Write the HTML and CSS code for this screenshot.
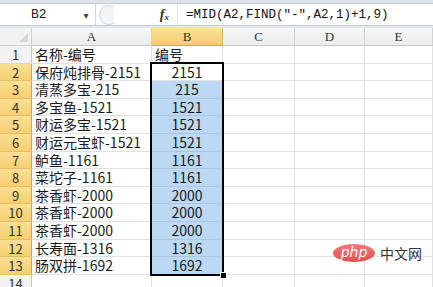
FILE: index.html
```html
<!DOCTYPE html>
<html lang="zh-CN">
<head>
    <meta charset="UTF-8">
    <title>MID FIND 提取编号</title>
    <link rel="stylesheet" href="styles.css">
</head>
<body>
    <div class="top-strip"></div>

    <!-- 编辑栏 -->
    <div class="formula-bar">
        <div class="name-box">
            <span class="cell-ref">B2</span>
            <span class="drop">&#9662;</span>
        </div>
        <div class="splitter"><span class="knob"></span></div>
        <div class="fx-area"><span class="fx">f<span class="fx-x">x</span></span></div>
        <div class="formula">=MID(A2,FIND(″-″,A2,1)+1,9)</div>
    </div>
    <div class="bar-gap"></div>

    <!-- 工作表 -->
    <div class="sheet">
        <div class="corner"><span class="tri"></span></div>
        <div class="ch">A</div>
        <div class="ch sel">B</div>
        <div class="ch">C</div>
        <div class="ch">D</div>
        <div class="ch">E</div>

        <div class="rh">1</div>
        <div class="c">名称-编号</div>
        <div class="c">编号</div>
        <div class="c"></div><div class="c"></div><div class="c"></div>

        <div class="rh sel">2</div>
        <div class="c">保府炖排骨-2151</div>
        <div class="c num">2151</div>
        <div class="c"></div><div class="c"></div><div class="c"></div>

        <div class="rh sel">3</div>
        <div class="c">清蒸多宝-215</div>
        <div class="c num hl">215</div>
        <div class="c"></div><div class="c"></div><div class="c"></div>

        <div class="rh sel">4</div>
        <div class="c">多宝鱼-1521</div>
        <div class="c num hl">1521</div>
        <div class="c"></div><div class="c"></div><div class="c"></div>

        <div class="rh sel">5</div>
        <div class="c">财运多宝-1521</div>
        <div class="c num hl">1521</div>
        <div class="c"></div><div class="c"></div><div class="c"></div>

        <div class="rh sel">6</div>
        <div class="c">财运元宝虾-1521</div>
        <div class="c num hl">1521</div>
        <div class="c"></div><div class="c"></div><div class="c"></div>

        <div class="rh sel">7</div>
        <div class="c">鲈鱼-1161</div>
        <div class="c num hl">1161</div>
        <div class="c"></div><div class="c"></div><div class="c"></div>

        <div class="rh sel">8</div>
        <div class="c">菜坨子-1161</div>
        <div class="c num hl">1161</div>
        <div class="c"></div><div class="c"></div><div class="c"></div>

        <div class="rh sel">9</div>
        <div class="c">茶香虾-2000</div>
        <div class="c num hl">2000</div>
        <div class="c"></div><div class="c"></div><div class="c"></div>

        <div class="rh sel">10</div>
        <div class="c">茶香虾-2000</div>
        <div class="c num hl">2000</div>
        <div class="c"></div><div class="c"></div><div class="c"></div>

        <div class="rh sel">11</div>
        <div class="c">茶香虾-2000</div>
        <div class="c num hl">2000</div>
        <div class="c"></div><div class="c"></div><div class="c"></div>

        <div class="rh sel">12</div>
        <div class="c">长寿面-1316</div>
        <div class="c num hl">1316</div>
        <div class="c"></div><div class="c"></div><div class="c"></div>

        <div class="rh sel">13</div>
        <div class="c">肠双拼-1692</div>
        <div class="c num hl">1692</div>
        <div class="c"></div><div class="c"></div><div class="c"></div>

        <div class="rh">14</div>
        <div class="c"></div><div class="c"></div>
        <div class="c"></div><div class="c"></div><div class="c"></div>

        <!-- 选区边框 B2:B13 -->
        <div class="selection"><span class="fill-handle"></span></div>

        <!-- 水印 -->
        <div class="watermark">
            <span class="php">php</span>
            <span class="cn">中文网</span>
        </div>
    </div>
</body>
</html>
```

FILE: styles.css
```css
body {
    margin: 0;
    width: 433px;
    height: 287px;
    overflow: hidden;
    background: #ffffff;
    font-family: "Noto Sans CJK SC", "DejaVu Sans", sans-serif;
    color: #1a1a1a;
}
.top-strip {
    height: 3px;
    background: #dfe3e8;
}
.formula-bar {
    display: flex;
    align-items: stretch;
    height: 23px;
    box-sizing: border-box;
    border-top: 1px solid #c6cbd1;
    border-bottom: 1px solid #c6cbd1;
    background: #ffffff;
}
.name-box {
    width: 96px;
    display: flex;
    align-items: center;
    border-right: 1px solid #d4d8dc;
    box-sizing: border-box;
}
.cell-ref {
    font-family: "Liberation Mono", monospace;
    font-size: 13px;
    margin-left: 31px;
    color: #222;
}
.drop {
    font-size: 10px;
    margin-left: 37px;
    color: #444;
}
.splitter {
    width: 18px;
    position: relative;
    overflow: hidden;
}
.knob {
    position: absolute;
    left: 3px;
    top: 1px;
    width: 18px;
    height: 18px;
    border-radius: 50%;
    border: 1px solid #cfd3d8;
    background: #f4f5f6;
}
.fx-area {
    width: 64px;
    display: flex;
    align-items: center;
    justify-content: flex-end;
    padding-right: 8px;
    box-sizing: border-box;
    border-right: 1px solid #e2e4e7;
}
.fx {
    font-family: "Liberation Serif", serif;
    font-style: italic;
    font-weight: bold;
    font-size: 14px;
    color: #333;
}
.fx-x {
    font-size: 9px;
    vertical-align: -1px;
}
.formula {
    flex-grow: 1;
    display: flex;
    align-items: center;
    padding-left: 8px;
    font-family: "Liberation Mono", monospace;
    font-size: 12.5px;
    color: #111;
}
.bar-gap {
    height: 2px;
    background: #e4e8ec;
}
.sheet {
    position: relative;
    display: grid;
    grid-template-columns: 32px 120px 71px 72px 70px 68px;
    grid-template-rows: 18px repeat(14, 17.6px);
}
.corner {
    position: relative;
    background: #f2f2f2;
    border-right: 1px solid #cfcfcf;
    border-bottom: 1px solid #cfcfcf;
    box-sizing: border-box;
}
.tri {
    position: absolute;
    right: 3px;
    bottom: 3px;
    border-left: 9px solid transparent;
    border-bottom: 9px solid #d6d6d6;
}
.ch {
    background: linear-gradient(#f7f7f7, #ececec);
    border-right: 1px solid #d2d2d2;
    border-bottom: 1px solid #c8c8c8;
    box-sizing: border-box;
    text-align: center;
    font-family: "Liberation Serif", serif;
    font-size: 13px;
    line-height: 18px;
    color: #333;
}
.ch.sel {
    background: linear-gradient(#fbe29c, #f5cc6a);
    border-right-color: #e2b45a;
    border-bottom-color: #d9a441;
}
.rh {
    background: #f2f2f2;
    border-right: 1px solid #c8c8c8;
    border-bottom: 1px solid #d6d6d6;
    box-sizing: border-box;
    text-align: center;
    font-size: 13px;
    line-height: 17px;
    color: #333;
}
.rh.sel {
    background: linear-gradient(#fbdf94, #f6cf70);
    border-right-color: #d9a441;
    border-bottom-color: #e6bd68;
}
.c {
    border-right: 1px solid #dfe1e3;
    border-bottom: 1px solid #dfe1e3;
    box-sizing: border-box;
    padding-left: 3px;
    font-size: 14px;
    line-height: 17px;
    white-space: nowrap;
}
.c.num {
    text-align: center;
    padding-left: 0;
}
.c.hl {
    background: #bcd8f3;
    border-right-color: #b2cbe3;
    border-bottom-color: #acc6e0;
}
.selection {
    position: absolute;
    left: 150px;
    top: 34px;
    width: 74px;
    height: 214px;
    border: 2px solid #000;
    box-sizing: border-box;
}
.fill-handle {
    position: absolute;
    right: -5px;
    bottom: -5px;
    width: 5px;
    height: 5px;
    background: #000;
    border: 1px solid #fff;
}
.watermark {
    position: absolute;
    right: 11px;
    top: 216px;
    display: flex;
    align-items: center;
    gap: 5px;
}
.php {
    flex: 0 0 42px;
    height: 18px;
    border-radius: 50%;
    background: linear-gradient(#f27d7c, #e2504f);
    color: #fff;
    font-family: "DejaVu Sans", sans-serif;
    font-style: italic;
    font-size: 14px;
    line-height: 17px;
    text-align: center;
}
.cn {
    font-size: 14px;
    line-height: 17px;
    color: #333;
}
```
